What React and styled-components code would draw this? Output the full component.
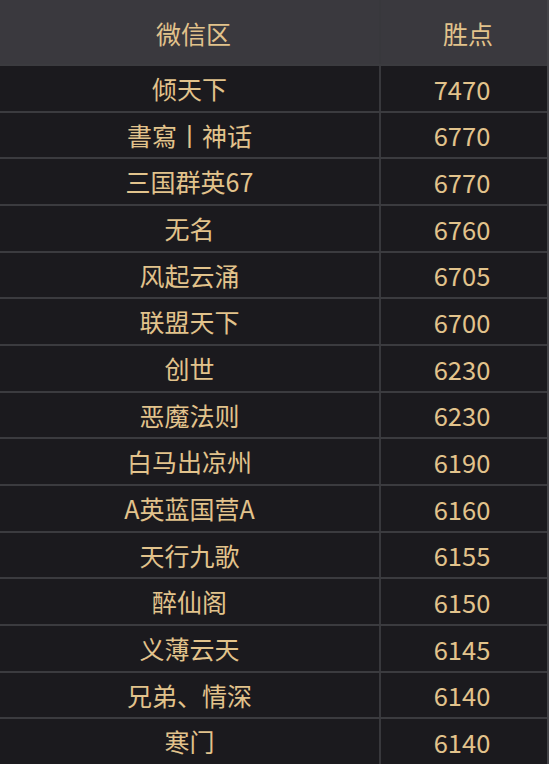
import React from "react";
import styled, { createGlobalStyle } from "styled-components";

const GlobalStyle = createGlobalStyle`
  html, body {
    margin: 0;
    padding: 0;
    background: #1b1a1e;
  }
`;

const Table = styled.div`
  width: 549px;
  height: 764px;
  display: flex;
  flex-direction: column;
  background: #1b1a1e;
  font-family: "Noto Sans CJK SC", "Noto Sans", sans-serif;
  color: #e2c38c;
  box-sizing: border-box;
  border-right: 2px solid #444448;
`;

const Row = styled.div`
  display: grid;
  grid-template-columns: 379px 1fr;
  flex: ${(p) => (p.$head ? "0 0 66px" : "1 1 0")};
  background: ${(p) => (p.$head ? "#3a393e" : "#1b1a1e")};
  border-bottom: 2px solid #3b3b3f;
  box-sizing: border-box;
  &:last-child {
    border-bottom: none;
  }
`;

const Cell = styled.div`
  display: flex;
  align-items: center;
  justify-content: center;
  font-size: ${(p) => (p.$num ? "25.5px" : "25px")};
  line-height: 1;
  padding-top: ${(p) => (p.$head ? "2px" : "0")};
  padding-left: ${(p) => (p.$head ? "8px" : "0")};
  padding-right: ${(p) => (p.$num ? "4px" : "0")};
  & + & {
    border-left: 2px solid ${(p) => (p.$head ? "#4a4a4e" : "#38383c")};
  }
`;

const rows = [
  ["倾天下", "7470"],
  ["書寫丨神话", "6770"],
  ["三国群英67", "6770"],
  ["无名", "6760"],
  ["风起云涌", "6705"],
  ["联盟天下", "6700"],
  ["创世", "6230"],
  ["恶魔法则", "6230"],
  ["白马出凉州", "6190"],
  ["A英蓝国营A", "6160"],
  ["天行九歌", "6155"],
  ["醉仙阁", "6150"],
  ["义薄云天", "6145"],
  ["兄弟、情深", "6140"],
  ["寒门", "6140"],
];

export default function App() {
  return (
    <>
      <GlobalStyle />
      <Table>
        <Row $head>
          <Cell $head>微信区</Cell>
          <Cell $head>胜点</Cell>
        </Row>
        {rows.map(([name, pts], i) => (
          <Row key={i}>
            <Cell>{name}</Cell>
            <Cell $num>{pts}</Cell>
          </Row>
        ))}
      </Table>
    </>
  );
}
